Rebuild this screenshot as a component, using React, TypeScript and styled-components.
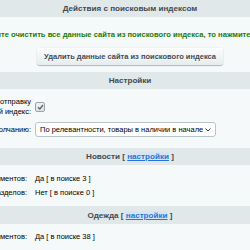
import React from 'react';
import styled, { createGlobalStyle } from 'styled-components';

const GlobalStyle = createGlobalStyle`
  html, body {
    margin: 0;
    padding: 0;
    background: #f5f9f9;
    overflow: hidden;
  }
  body {
    font-family: "Liberation Sans", Arial, sans-serif;
  }
`;

// the form is wider than the window; it stays centred a little right of the middle
const Viewport = styled.div`
  width: 250px;
  height: 250px;
  overflow: hidden;
  display: flex;
  justify-content: center;
  padding-left: 10px;
  box-sizing: border-box;
`;

const FormTable = styled.div`
  width: 960px;
  flex-shrink: 0;
  display: flex;
  flex-direction: column;
`;

const SectionTitle = styled.div<{ h?: number }>`
  height: ${p => p.h ?? 20}px;
  background: #e0e8ea;
  color: #3f4b54;
  font-size: 8.1px;
  font-weight: bold;
  display: flex;
  align-items: center;
  justify-content: center;
  white-space: pre;
`;

const SettingsLink = styled.a`
  color: #2675d7;
  text-decoration: underline;
  font-weight: bold;
  background: #d6e4f3;
`;

const SectionBody = styled.div<{ pt: number; pb: number }>`
  background: #f5f9f9;
  padding: ${p => p.pt}px 0 ${p => p.pb}px;
  display: flex;
  flex-direction: column;
`;

const Notice = styled.div`
  color: #217c0c;
  font-size: 7.6px;
  font-weight: bold;
  text-align: center;
  white-space: nowrap;
  line-height: 11px;
`;

const ButtonRow = styled.div`
  display: flex;
  justify-content: center;
  margin-top: 8px;
`;

const Button = styled.button`
  height: 17px;
  width: 186px;
  padding: 0;
  border: none;
  border-radius: 3px;
  background: linear-gradient(#fbfcfc, #e6ecee);
  box-shadow: 0 0 1px rgba(0, 0, 0, 0.25), 0 1px 1px rgba(0, 0, 0, 0.25), inset 0 1px #fff;
  color: #3f4b54;
  font-family: "Liberation Sans", Arial, sans-serif;
  font-size: 7.5px;
  font-weight: bold;
  text-shadow: 0 1px rgba(255, 255, 255, 0.7);
  white-space: nowrap;
`;

const FieldRow = styled.div<{ mt?: number }>`
  display: grid;
  grid-template-columns: 40% 60%;
  align-items: center;
  margin-top: ${p => p.mt ?? 0}px;
`;

const Label = styled.div<{ pr: number }>`
  text-align: right;
  padding-right: ${p => p.pr}px;
  color: #000;
  font-size: 7.5px;
  line-height: 10px;
  white-space: nowrap;
`;

const Value = styled.div`
  padding-left: 1px;
  color: #000;
  font-size: 7.5px;
  line-height: 10px;
  display: flex;
  align-items: center;
  white-space: nowrap;
`;

const CheckBox = styled.span`
  width: 8px;
  height: 8px;
  border: 1px solid #98a4a9;
  border-radius: 2px;
  background: linear-gradient(#eef2f3, #dde4e6);
  display: flex;
  align-items: center;
  justify-content: center;
`;

const Select = styled.div`
  width: 181px;
  height: 15px;
  box-sizing: border-box;
  border: 1px solid #b9c4c9;
  border-radius: 3px;
  background: #fff;
  display: flex;
  align-items: center;
  justify-content: space-between;
  padding: 0 4px 0 4px;
  font-size: 7.5px;
  color: #000;
  white-space: nowrap;
`;

const Check = () => (
  <svg width="7" height="6" viewBox="0 0 7 6">
    <path d="M1 3.2 L2.8 5 L6 1" fill="none" stroke="#56666c" strokeWidth="1.3" />
  </svg>
);

const Chevron = () => (
  <svg width="6" height="4" viewBox="0 0 6 4">
    <path d="M0.5 0.5 L3 3 L5.5 0.5" fill="none" stroke="#333" strokeWidth="1" />
  </svg>
);

export default function App() {
  return (
    <>
      <GlobalStyle />
      <Viewport>
        <FormTable>
          <SectionTitle>Действия с поисковым индексом</SectionTitle>
          <SectionBody pt={12} pb={7}>
            <Notice>
              Если вы хотите очистить все данные сайта из поискового индекса, то нажмите на кнопку ниже
            </Notice>
            <ButtonRow>
              <Button>Удалить данные сайта из поискового индекса</Button>
            </ButtonRow>
          </SectionBody>

          <SectionTitle>Настройки</SectionTitle>
          <SectionBody pt={8} pb={11}>
            <FieldRow>
              <Label pr={3}>
                Разрешить автоматическую отправку
                <br />
                данных в поисковый индекс:
              </Label>
              <Value>
                <CheckBox>
                  <Check />
                </CheckBox>
              </Value>
            </FieldRow>
            <FieldRow mt={5}>
              <Label pr={3}>Сортировка по умолчанию:</Label>
              <Value>
                <Select>
                  <span>По релевантности, товары в наличии в начале</span>
                  <Chevron />
                </Select>
              </Value>
            </FieldRow>
          </SectionBody>

          <SectionTitle>
            Новости [ <SettingsLink>настройки</SettingsLink> ]
          </SectionTitle>
          <SectionBody pt={9} pb={8}>
            <FieldRow>
              <Label pr={7}>Индексировать элементов:</Label>
              <Value>Да [ в поиске 3 ]</Value>
            </FieldRow>
            <FieldRow mt={4}>
              <Label pr={7}>Индексировать разделов:</Label>
              <Value>Нет [ в поиске 0 ]</Value>
            </FieldRow>
          </SectionBody>

          <SectionTitle h={21}>
            Одежда [ <SettingsLink>настройки</SettingsLink> ]
          </SectionTitle>
          <SectionBody pt={8} pb={8}>
            <FieldRow>
              <Label pr={7}>Индексировать элементов:</Label>
              <Value>Да [ в поиске 38 ]</Value>
            </FieldRow>
          </SectionBody>
        </FormTable>
      </Viewport>
    </>
  );
}
